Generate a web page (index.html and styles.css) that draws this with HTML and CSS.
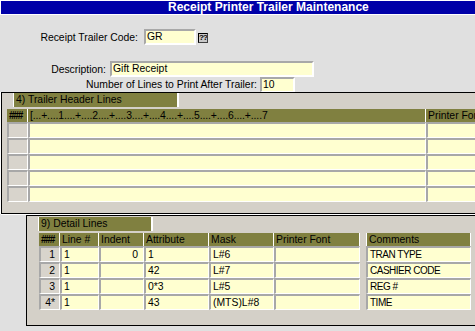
FILE: index.html
```html
<!DOCTYPE html>
<html>
<head>
<meta charset="utf-8">
<link rel="stylesheet" href="styles.css">
</head>
<body>
<div class="title">Receipt Printer Trailer Maintenance</div>
<div class="form">
  <div class="field f-code"><span class="lbl">Receipt Trailer Code:</span><span class="input in-code">GR</span><span class="lookup">??</span></div>
  <div class="field f-desc"><span class="lbl">Description:</span><span class="input in-desc">Gift Receipt</span></div>
  <div class="field f-lines"><span class="lbl">Number of Lines to Print After Trailer:</span><span class="input in-lines">10</span></div>
</div>
<section class="panel p-header">
  <div class="tab tab-header">4) Trailer Header Lines</div>
  <div class="grid g-header">
    <div class="h hash">###</div><div class="h ruler">[...+....1....+....2....+....3....+....4....+....5....+....6....+....7</div><div class="h">Printer Font</div>
    <div class="c n"></div><div class="c"></div><div class="c"></div>
    <div class="c n"></div><div class="c"></div><div class="c"></div>
    <div class="c n"></div><div class="c"></div><div class="c"></div>
    <div class="c n"></div><div class="c"></div><div class="c"></div>
    <div class="c n"></div><div class="c"></div><div class="c"></div>
  </div>
</section>
<section class="panel p-detail">
  <div class="tab tab-detail">9) Detail Lines</div>
  <div class="detail-wrap">
    <div class="grid g-detail">
      <div class="h hash">###</div><div class="h">Line #</div><div class="h">Indent</div><div class="h">Attribute</div><div class="h">Mask</div><div class="h">Printer Font</div>
      <div class="c n">1</div><div class="c">1</div><div class="c r">0</div><div class="c">1</div><div class="c">L#6</div><div class="c"></div>
      <div class="c n">2</div><div class="c">1</div><div class="c r"></div><div class="c">42</div><div class="c">L#7</div><div class="c"></div>
      <div class="c n">3</div><div class="c">1</div><div class="c r"></div><div class="c">0*3</div><div class="c">L#5</div><div class="c"></div>
      <div class="c n">4*</div><div class="c">1</div><div class="c r"></div><div class="c">43</div><div class="c">(MTS)L#8</div><div class="c"></div>
    </div>
    <div class="grid g-comments">
      <div class="h h-first">Comments</div>
      <div class="c caps">TRAN TYPE</div>
      <div class="c caps">CASHIER CODE</div>
      <div class="c caps">REG #</div>
      <div class="c caps">TIME</div>
    </div>
  </div>
</section>
</body>
</html>
```

FILE: styles.css
```css
html, body {
  margin: 0;
  padding: 0;
}
body {
  width: 475px;
  height: 331px;
  overflow: hidden;
  background: #e0e0e0;
  color: #000;
  font-family: "Liberation Sans", Arial, sans-serif;
  font-size: 10.4px;
}

.title {
  height: 13px;
  border: 1px solid #fff;
  border-right: 0;
  background: #0000a8;
  color: #fff;
  font-weight: bold;
  font-size: 12px;
  line-height: 13px;
  padding-left: 167px;
  white-space: nowrap;
}

.form {
  padding-top: 14px;
}
.field {
  display: flex;
  align-items: center;
}
.lbl {
  box-sizing: border-box;
  text-align: right;
  white-space: nowrap;
}
.input {
  box-sizing: border-box;
  height: 16px;
  border-style: solid;
  border-width: 2px;
  border-color: #a8a8a8 #fff #fff #a8a8a8;
  background: #ffffd0;
  padding-left: 1px;
  line-height: 12px;
  white-space: nowrap;
}
.f-code .lbl {
  width: 144px;
  padding-right: 6px;
}
.in-code {
  width: 52px;
}
.lookup {
  box-sizing: border-box;
  width: 10px;
  height: 10px;
  margin: 2px 0 0 2px;
  border: 1px solid #000;
  border-right-color: #404040;
  border-bottom-color: #404040;
  background: #c8c8c8;
  font-size: 8px;
  font-weight: bold;
  line-height: 8px;
  letter-spacing: -1px;
  text-align: center;
  overflow: hidden;
}
.f-desc {
  margin-top: 16px;
}
.f-desc .lbl {
  width: 110px;
  padding-right: 4px;
}
.in-desc {
  width: 204px;
}
.f-lines .lbl {
  width: 260px;
  padding-right: 3px;
}
.in-lines {
  width: 35px;
  height: 15px;
  border-bottom-width: 1px;
}

.panel {
  background: #d4d0c8;
  border: 1px solid #000;
  border-right: 0;
  overflow: hidden;
}
.p-header {
  margin-left: 1px;
  height: 120px;
  box-shadow: -1px 0 0 #fff, 0 1px 0 #fff;
}
.p-detail {
  margin-left: 26px;
  margin-top: 1px;
  height: 108px;
  padding-top: 1px;
}

.tab {
  box-sizing: border-box;
  height: 14px;
  background: #808040;
  border-left: 1px solid #fff;
  border-right: 2px solid #fff;
  padding-left: 2px;
  line-height: 14px;
  white-space: nowrap;
}
.tab-header {
  margin-left: 11px;
  width: 166px;
}
.tab-detail {
  margin-left: 11px;
  width: 115px;
}

.grid {
  display: grid;
  grid-template-rows: 13px;
  grid-auto-rows: 16px;
}
.g-header {
  margin: 2px 0 0 5px;
  grid-template-columns: 21px 398px 100px;
}
.detail-wrap {
  display: flex;
  margin: 2px 0 0 12px;
}
.g-detail {
  grid-template-columns: 21px 39px 45px 65px 65px 86px;
}
.g-comments {
  margin-left: 6px;
  grid-template-columns: 105px;
}

.h {
  box-sizing: border-box;
  background: #808040;
  border-right: 1px solid #fff;
  padding-left: 2px;
  line-height: 13px;
  white-space: nowrap;
  overflow: hidden;
}
.h-first {
  border-left: 1px solid #fff;
}
.hash {
  font-weight: bold;
  font-size: 10px;
  letter-spacing: -1.2px;
}
.ruler {
  letter-spacing: -0.1px;
}
.c {
  box-sizing: border-box;
  background: #ffffd0;
  border-style: solid;
  border-width: 2px 1px 1px 2px;
  border-color: #a8a8a8 #fff #fff #a8a8a8;
  padding: 0 2px;
  line-height: 13px;
  white-space: nowrap;
  overflow: hidden;
}
.c.n {
  background: #d8d4cc;
  text-align: right;
  padding-right: 4px;
}
.c.r {
  text-align: right;
  padding-right: 5px;
}
.caps {
  letter-spacing: -0.5px;
  font-size: 10px;
}
```
